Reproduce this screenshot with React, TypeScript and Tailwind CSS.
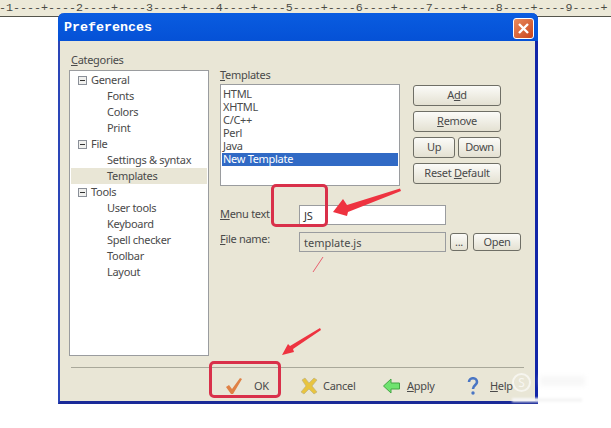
import React from "react";

const SANS = "font-['Noto_Sans','DejaVu_Sans',sans-serif]";

function Btn({ children, w }: { children: React.ReactNode; w: string }) {
  return (
    <div className={`${w} h-[21px] flex items-center justify-center rounded-[3px] border border-[#6f6f66] bg-gradient-to-b from-[#fbfbf8] to-[#e4e1d2] text-[#4a4a4a]`}>
      {children}
    </div>
  );
}

function TreeRow({ label, head, sel }: { label: string; head?: boolean; sel?: boolean }) {
  return (
    <div className={`h-4 flex items-center ${sel ? "bg-[#e9e6d6]" : ""} ${head ? "pl-[7px]" : "pl-[36px]"}`}>
      {head && (
        <span className="w-[9px] h-[9px] mr-[4px] border border-[#8a8f98] bg-[#f0f0ee] flex items-center justify-center">
          <span className="w-[5px] h-px bg-[#333]" />
        </span>
      )}
      <span>{label}</span>
    </div>
  );
}

function FootBtn({ icon, children, cls }: { icon: React.ReactNode; children: React.ReactNode; cls: string }) {
  return (
    <div className={`flex items-center ${cls}`}>
      {icon}
      {children}
    </div>
  );
}

export default function App() {
  const ruler = "-1----+----2----+----3----+----4----+----5----+----6----+----7----+----8----+----9----+";
  return (
    <div className={`relative w-[611px] h-[428px] bg-white overflow-hidden ${SANS}`}>
      <div className="h-[17px] bg-[#ece9d8] border-b border-[#55554c] whitespace-nowrap font-['Liberation_Mono',monospace] text-[11.67px] leading-[16px] text-[#4a4a44]">
        <span className="block -ml-px">{ruler}</span>
      </div>

      <div className="absolute left-[58px] top-[13px] w-[480px] h-[391px] rounded-t-[6px] border-l-2 border-r-[3px] border-b-[3px] border-l-[#2a45b8] border-r-[#1226a8] border-b-[#1a2a98] bg-[#e9e6d6] flex flex-col text-[11px] tracking-[-0.3px] text-[#4a4a4a]">
        <div className="h-[28px] -ml-[2px] -mr-[3px] shrink-0 rounded-t-[6px] bg-gradient-to-b from-[#0a5ce0] to-[#0551d6] flex items-center justify-between pl-[6px] pr-[4px] pt-[2px]">
          <span className="font-['Liberation_Mono',monospace] font-bold text-[13.33px] tracking-normal text-white">Preferences</span>
          <span className="w-[21px] h-[21px] rounded-[3px] border border-white bg-gradient-to-br from-[#e88a5c] to-[#c9431a] flex items-center justify-center">
            <svg width="13" height="13" viewBox="0 0 13 13"><path d="M2 2l9 9M11 2l-9 9" stroke="#fff" strokeWidth="2.4" /></svg>
          </span>
        </div>

        <div className="flex pl-[9px] pt-[12px]">
          <div className="w-[140px]">
            <div className="h-[17px] leading-[14px] pl-[2px]"><u>C</u>ategories</div>
            <div className="h-[286px] border border-[#9a9c9f] bg-white p-px">
              <TreeRow label="General" head />
              <TreeRow label="Fonts" />
              <TreeRow label="Colors" />
              <TreeRow label="Print" />
              <TreeRow label="File" head />
              <TreeRow label="Settings & syntax" />
              <TreeRow label="Templates" sel />
              <TreeRow label="Tools" head />
              <TreeRow label="User tools" />
              <TreeRow label="Keyboard" />
              <TreeRow label="Spell checker" />
              <TreeRow label="Toolbar" />
              <TreeRow label="Layout" />
            </div>
          </div>

          <div className="ml-[11px] pt-[15px]">
            <div className="flex">
              <div>
                <div className="h-4 leading-[14px]"><u>T</u>emplates</div>
                <div className="w-[180px] h-[102px] border border-[#9a9c9f] bg-white p-px leading-[13px]">
                  <div className="pt-[2px]">
                    {["HTML", "XHTML", "C/C++", "Perl", "Java"].map((t) => (
                      <div key={t} className="h-[13px] pl-[1px] leading-[11px]">{t}</div>
                    ))}
                    <div className="h-[13px] pl-[1px] bg-[#316ac5] text-white leading-[11px]">New Template</div>
                  </div>
                </div>
              </div>
              <div className="ml-[13px] pt-[17px] w-[88px] flex flex-col gap-[5px]">
                <Btn w="w-[88px]"><span>A<u>d</u>d</span></Btn>
                <Btn w="w-[88px]"><span><u>R</u>emove</span></Btn>
                <div className="flex justify-between">
                  <Btn w="w-[42px]">Up</Btn>
                  <Btn w="w-[43px]">Down</Btn>
                </div>
                <Btn w="w-[88px]"><span>Reset <u>D</u>efault</span></Btn>
              </div>
            </div>

            <div className="flex items-center mt-[19px] h-[20px]">
              <div className="w-[79px] -mt-px"><u>M</u>enu text</div>
              <div className="w-[147px] h-[20px] border border-[#9a9c9f] bg-white pl-[4px] leading-[19px] text-[#333]">JS</div>
            </div>
            <div className="flex items-center mt-[7px] h-[20px]">
              <div className="w-[79px] -mt-[6px]"><u>F</u>ile name:</div>
              <div className="w-[147px] h-[20px] border border-[#9a9c9f] bg-[#e9e6d6] pl-[4px] leading-[19px] tracking-normal">template.js</div>
              <div className="ml-[4px] w-[18px] h-[18px] flex items-center justify-center rounded-[3px] border border-[#6f6f66] bg-gradient-to-b from-[#fbfbf8] to-[#e4e1d2] leading-[12px]">...</div>
              <div className="ml-[5px] w-[48px] h-[18px] flex items-center justify-center rounded-[3px] border border-[#6f6f66] bg-gradient-to-b from-[#fbfbf8] to-[#e4e1d2]">Open</div>
            </div>
          </div>
        </div>

        <div className="mt-[11px] mx-[11px] h-px bg-[#a9a89a]" />

        <div className="flex items-center h-[33px] pt-[3px]">
          <FootBtn cls="ml-[165px] w-[75px]" icon={
            <svg className="mr-[11px]" width="18" height="18" viewBox="0 0 18 18"><path d="M1 10l3-2 3 4 8-11 2 1-9 15H6z" fill="#df8145" /></svg>
          }>OK</FootBtn>
          <FootBtn cls="w-[83px]" icon={
            <svg className="mr-[5px]" width="18" height="18" viewBox="0 0 18 18"><path d="M2 3l3-2 4 5 5-5 3 2-5 6 5 6-3 2-5-5-5 5-3-2 5-6z" fill="#e8c440" stroke="#b7ad82" strokeWidth="0.6" /></svg>
          }>Cancel</FootBtn>
          <FootBtn cls="w-[84px]" icon={
            <svg className="mr-[7px]" width="17" height="16" viewBox="0 0 17 16"><path d="M0.5 8L8 1v4h8.5v6H8v4z" fill="#6fe36f" stroke="#45a545" /></svg>
          }><span><u>A</u>pply</span></FootBtn>
          <FootBtn cls="" icon={
            <svg className="mr-[11px]" width="12" height="18" viewBox="0 0 12 18"><path d="M2 5c0-5 8-5 8 0 0 3-4 3-4 7" fill="none" stroke="#4a76c4" strokeWidth="2.6" /><circle cx="6" cy="16" r="1.7" fill="#4a76c4" /></svg>
          }><span><u>H</u>elp</span></FootBtn>
        </div>
      </div>

      <div className="absolute left-[271px] top-[184px] w-[57px] h-[43px] rounded-[5px] border-[3px] border-[#d9304a]" />
      <div className="absolute left-[209px] top-[361px] w-[72px] h-[37px] rounded-[5px] border-[3px] border-[#d9304a]" />

      <svg className="absolute left-0 top-0" width="611" height="428" viewBox="0 0 611 428">
        <path d="M400 188.5L401 191L348 212L347 216L333 212L343 199L347 205Z" fill="#ee3340" />
        <path d="M320 328L321 330L293 349L294 352L282 355L288 344L290 346Z" fill="#ee3340" />
        <path d="M323 257L313 272" stroke="#e8606e" strokeWidth="1" />
      </svg>

      <div className="absolute left-[512px] top-[373px] w-[19px] h-[19px] rounded-full border-2 border-white/60 flex items-center justify-center text-[12px] text-white/70">S</div>
      <div className="absolute left-[540px] top-[376px] w-[45px] h-[10px] bg-[#f7f7f7] blur-[2px]" />
      <div className="absolute left-[512px] top-[398px] w-[70px] h-[4px] bg-[#f6f6f6] blur-[1px]" />
    </div>
  );
}
